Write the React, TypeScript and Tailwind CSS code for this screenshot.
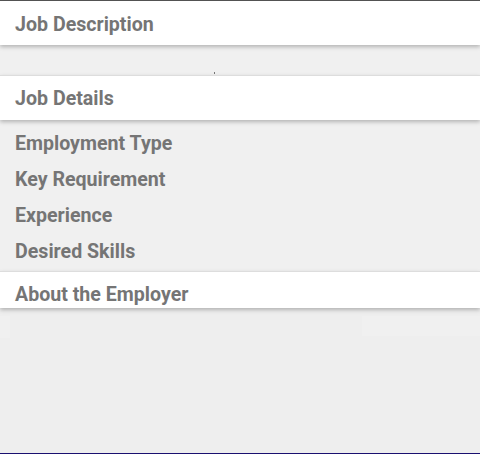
export default function App() {
  const details = ['Employment Type', 'Key Requirement', 'Experience', 'Desired Skills'];

  return (
    <div
      className="flex h-[454px] w-[480px] flex-col overflow-hidden bg-[#eeeeee] text-[#757575]"
      style={{ fontFamily: 'Roboto, "Noto Sans", sans-serif' }}
    >
      <div className="h-px bg-[#555555]" />

      {/* Job Description */}
      <div className="relative z-10 flex h-[44px] items-center bg-white px-[15px] pt-[3px] shadow-[0_2px_4px_rgba(0,0,0,0.25)]">
        <span className="text-[19.6px] font-bold">Job Description</span>
      </div>

      <div className="relative h-[30px] bg-[#f0f0f0]">
        <span className="absolute left-[214px] top-[27px] h-[2px] w-px bg-[#777]" />
      </div>

      {/* Job Details */}
      <div className="relative z-10 flex h-[45px] items-center border-t border-[#dddddd] bg-white px-[15px] pt-[1px] shadow-[0_2px_4px_rgba(0,0,0,0.25)]">
        <span className="text-[19.6px] font-bold">Job Details</span>
      </div>

      <div className="flex flex-col bg-[#f0f0f0] pt-[6px] pb-[1px]">
        {details.map((d) => (
          <div key={d} className="flex h-[36px] items-center px-[15px]">
            <span className="text-[19.6px] font-bold">{d}</span>
          </div>
        ))}
      </div>

      {/* About the Employer */}
      <div className="relative z-10 flex h-[37px] items-end border-t border-[#dddddd] bg-white px-[15px] pb-[1px] shadow-[0_2px_4px_rgba(0,0,0,0.25)]">
        <span className="text-[19.6px] font-bold leading-[24px]">About the Employer</span>
      </div>

      <div className="flex h-[22px] bg-[#eeeeee] pt-[8px]">
        <div className="h-[22px] w-[10px] bg-[#f0f0f0]" />
        <div className="h-[22px] flex-1 bg-[#eeeeee]" />
        <div className="h-[20px] w-[118px] bg-[#f0f0f0]" />
      </div>

      <div className="flex-1" />
      <div className="h-px bg-[#1a1070]" />
    </div>
  );
}
